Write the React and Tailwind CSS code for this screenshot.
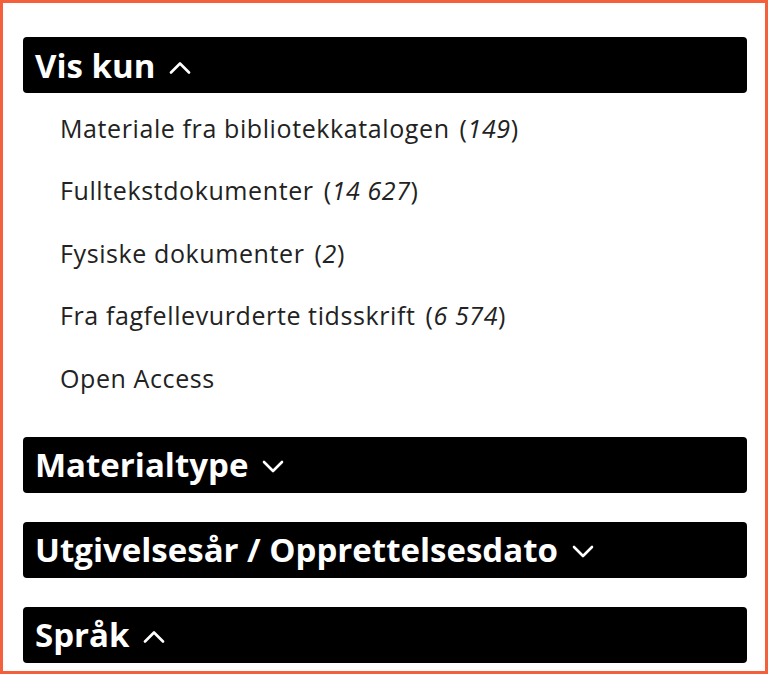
import React from 'react';

const Chevron = ({ up }) => (
  <svg width="22" height="13" viewBox="0 0 22 13" fill="none" stroke="currentColor" strokeWidth="2.6" strokeLinecap="round" strokeLinejoin="round" className="ml-[14px] mt-1">
    {up ? <path d="M2 11.5L11 2.5l9 9" /> : <path d="M2 2l9 9 9-9" />}
  </svg>
);

const FacetHeader = ({ title, open }) => (
  <button className="flex items-center w-full h-[56px] px-3 bg-black text-white rounded-[4px] text-left">
    <span className="text-[33px] font-bold leading-none">{title}</span>
    <Chevron up={open} />
  </button>
);

const items = [
  { label: 'Materiale fra bibliotekkatalogen', count: '149' },
  { label: 'Fulltekstdokumenter', count: '14 627' },
  { label: 'Fysiske dokumenter', count: '2' },
  { label: 'Fra fagfellevurderte tidsskrift', count: '6 574' },
  { label: 'Open Access' },
];

export default function App() {
  return (
    <div className="w-[768px] h-[674px] overflow-hidden bg-white border-[3px] border-[#f5603c] pl-5 pr-[18px] pt-[34px]" style={{ fontFamily: '"Open Sans", Lato, sans-serif' }}>
      <FacetHeader title="Vis kun" open />
      <ul className="pl-[37px] pt-1 pb-[27px] text-[#222] text-[25px] tracking-[0.6px]">
        {items.map((it) => (
          <li key={it.label} className="h-[62.5px] flex items-center">
            <span>{it.label}</span>
            {it.count && (
              <span className="ml-[10px]">(<i>{it.count}</i>)</span>
            )}
          </li>
        ))}
      </ul>
      <div className="flex flex-col gap-[29px]">
        <FacetHeader title="Materialtype" />
        <FacetHeader title="Utgivelsesår / Opprettelsesdato" />
        <FacetHeader title="Språk" open />
      </div>
    </div>
  );
}
